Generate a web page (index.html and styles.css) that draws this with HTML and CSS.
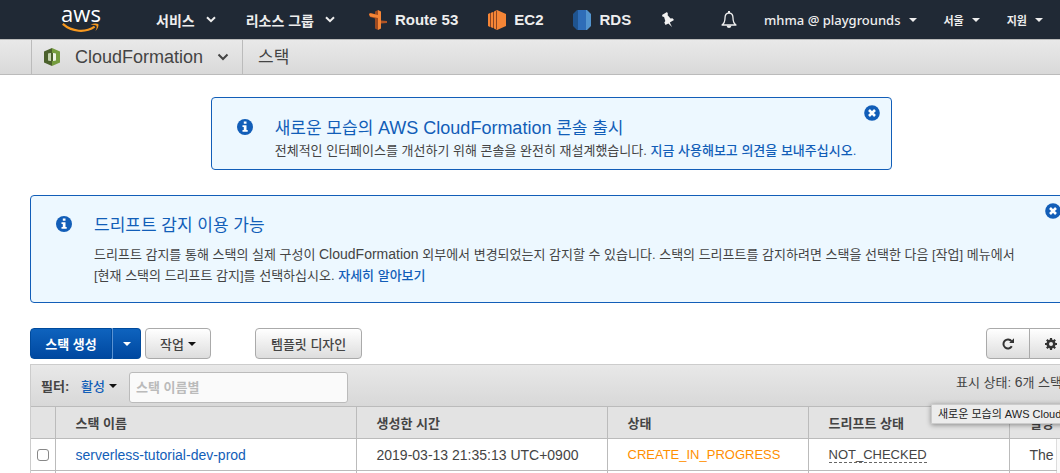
FILE: index.html
```html
<!DOCTYPE html>
<html lang="ko">
<head>
<meta charset="utf-8">
<title>CloudFormation 스택</title>
<link rel="stylesheet" href="styles.css">
</head>
<body>
<nav class="topnav">
  <a class="logo" href="#" aria-label="aws">
    <span class="logo-text">aws</span>
    <svg class="logo-smile" width="42" height="10" viewBox="0 0 42 11"><path d="M1 1C11 10 26 11 36 4" fill="none" stroke="#f7981f" stroke-width="2.4"/><path d="M31.5 1.6C35 .2 38.5.2 40 1.2c.8 2-.6 5.400-3 7.600.8-2.400 1.800-4.800 1-5.800-1-.8-3.800-.9-6.500-1.400z" fill="#f7981f"/></svg>
  </a>
  <button class="nav-item">서비스<svg width="10" height="7" viewBox="0 0 10 7"><path d="M1 1.200l4 4 4-4" class="chev"/></svg></button>
  <button class="nav-item nav-groups">리소스 그룹<svg width="10" height="7" viewBox="0 0 10 7"><path d="M1 1.200l4 4 4-4" class="chev"/></svg></button>
  <a class="shortcut" href="#"><svg width="18" height="20" viewBox="0 0 18 20"><path d="M6 1.500L9 0v20l-3-1.500V8.500L1 7 0 4l1-1 5 1z" fill="#9d4a20"/><path d="M9 0l3 1.500v17L9 20z" fill="#f58536"/><path d="M0 4l1.500-.8L9 5v3L1 6.500z" fill="#f58536"/><path d="M12 10.500l6 .5v2l-6 .5z" fill="#b05425"/></svg>Route 53</a>
  <a class="shortcut" href="#"><svg width="18" height="20" viewBox="0 0 18 20"><path d="M0 4l2-1v14l-2-1zM3 2.800L5 2v16l-2-.8zM6 1.500L9 0v20l-3-1.500z" fill="#f58536"/><path d="M2 3h1v14H2zM5 2h1v16H5zM8 .5h1v19H8z" fill="#8a4523"/><path d="M9 0l9 4v12l-9 4z" fill="#f58536"/></svg>EC2</a>
  <a class="shortcut" href="#"><svg width="18" height="20" viewBox="0 0 18 20"><path d="M0 4l4-4h5v20H4l-4-4z" fill="#1f5490"/><path d="M5 0h8v20H5z" fill="#2e6db8"/><path d="M13 0h1l4 4v12l-4 4h-1z" fill="#5294cf"/></svg>RDS</a>
  <button class="icon-btn" aria-label="고정"><svg width="13" height="15" viewBox="0 0 13 15"><path d="M1 3L6 0l1 2-.5 1L9.500 6.500l2-.3L13 8l-4.200 2.500L11 15 7.300 11.400 4.500 13 3.300 10.500l1-1.500L3 4.700 1.800 5z" fill="#f2f2f2"/></svg></button>
  <div class="nav-right">
    <button class="icon-btn" aria-label="알림"><svg width="16" height="17" viewBox="0 0 16 17"><path d="M8 2C5 2 4 4 4 7c0 3-.8 5.500-3 7h14c-2.200-1.500-3-4-3-7 0-3-1-5-4-5z" fill="none" stroke="#eee" stroke-width="1.300" stroke-linejoin="round"/><path d="M7 0h2v2H7zM5.500 14.500h5Q10 17 8 17t-2.500-2.500z" fill="#eee"/></svg></button>
    <button class="menu user">mhma @ playgrounds<i class="caret"></i></button>
    <button class="menu">서울<i class="caret"></i></button>
    <button class="menu">지원<i class="caret"></i></button>
  </div>
</nav>
<header class="subnav">
  <button class="service">
    <svg width="16" height="18" viewBox="0 0 16 18"><path d="M0 3.500L8 0v5L4 5.700v6.600l4 .7v5L0 14.500z" fill="#4b612c"/><path d="M16 3.500L8 0v5l4 .7v6.600l-4 .7v5l8-3.500z" fill="#759c3e"/><path d="M4 5.700L7 5v8l-3-.7z" fill="#c4d4ae"/><path d="M9 5l3 .7v6.600L9 13z" fill="#eef4e4"/><path d="M7 5h2v8H7z" fill="#4b612c"/></svg>
    <span>CloudFormation</span>
    <svg width="12" height="8" viewBox="0 0 12 8"><path d="M1.500 1.500L6 6l4.500-4.500" fill="none" stroke="#444" stroke-width="2"/></svg>
  </button>
  <h1 class="crumb">스택</h1>
</header>
<main class="content">
  <section class="notice notice-small">
    <svg class="info" width="16" height="16" viewBox="0 0 16 16"><circle cx="8" cy="8" r="8" fill="#125eb8"/><path d="M6.800 2.500h2.700v2.200H6.800zM5.500 6.300h4v4.700h1.200v1.800H5.500V11h1.300V8H5.500z" fill="#fff"/></svg>
    <div>
      <h2>새로운 모습의 <span class="latin">AWS CloudFormation</span> 콘솔 출시</h2>
      <p>전체적인 인터페이스를 개선하기 위해 콘솔을 완전히 재설계했습니다. <a href="#">지금 사용해보고 의견을 보내주십시오.</a></p>
    </div>
    <button class="close" aria-label="닫기"><svg width="16" height="16" viewBox="0 0 16 16"><circle cx="8" cy="8" r="7.800" fill="#125eb8"/><path d="M5 5l6 6M11 5l-6 6" stroke="#fff" stroke-width="2.600"/></svg></button>
  </section>
  <section class="notice notice-wide">
    <svg class="info" width="16" height="16" viewBox="0 0 16 16"><circle cx="8" cy="8" r="8" fill="#125eb8"/><path d="M6.800 2.500h2.700v2.200H6.800zM5.500 6.300h4v4.700h1.200v1.800H5.500V11h1.300V8H5.500z" fill="#fff"/></svg>
    <div>
      <h2>드리프트 감지 이용 가능</h2>
      <p>드리프트 감지를 통해 스택의 실제 구성이 <span class="latin">CloudFormation</span> 외부에서 변경되었는지 감지할 수 있습니다. 스택의 드리프트를 감지하려면 스택을 선택한 다음 [작업] 메뉴에서 [현재 스택의 드리프트 감지]를 선택하십시오. <a href="#">자세히 알아보기</a></p>
    </div>
    <button class="close" aria-label="닫기"><svg width="16" height="16" viewBox="0 0 16 16"><circle cx="8" cy="8" r="7.800" fill="#125eb8"/><path d="M5 5l6 6M11 5l-6 6" stroke="#fff" stroke-width="2.600"/></svg></button>
  </section>
  <div class="toolbar">
    <div class="group">
      <button class="btn primary">스택 생성</button><button class="btn primary split" aria-label="생성 옵션"><i class="caret"></i></button>
    </div>
    <button class="btn action">작업<i class="caret"></i></button>
    <button class="btn design">템플릿 디자인</button>
    <div class="group tools">
      <button class="btn tool" aria-label="새로 고침"><svg width="12" height="12" viewBox="0 0 12 12"><path d="M9.800 8.300A4.500 4.500 0 1 1 9.500 3.200" fill="none" stroke="#333" stroke-width="2"/><path d="M12 .3V5H7.200z" fill="#333"/></svg></button><button class="btn tool" aria-label="설정"><svg width="12" height="12" viewBox="0 0 12 12"><circle cx="6" cy="6" r="3.300" fill="none" stroke="#333" stroke-width="2.600"/><path d="M6 0v2.500M6 9.500V12M0 6h2.500M9.500 6H12M1.800 1.800l1.700 1.700M8.500 8.500l1.700 1.700M1.800 10.200l1.700-1.700M8.500 3.500l1.700-1.700" stroke="#333" stroke-width="2.200"/></svg></button>
    </div>
  </div>
  <div class="panel">
    <div class="filter">
      <label for="q">필터:</label>
      <button class="active-filter">활성<i class="caret"></i></button>
      <input id="q" type="text" placeholder="스택 이름별">
      <span class="count">표시 상태: <span class="latin">6</span>개 스택</span>
    </div>
    <table>
      <colgroup><col class="c-check"><col class="c-name"><col class="c-time"><col class="c-state"><col class="c-drift"><col class="c-desc"><col class="c-gutter"></colgroup>
      <thead><tr><th></th><th>스택 이름</th><th>생성한 시간</th><th>상태</th><th>드리프트 상태</th><th colspan="2">설명</th></tr></thead>
      <tbody>
        <tr><td class="check"><input type="checkbox" aria-label="serverless-tutorial-dev-prod"></td><td><a href="#">serverless-tutorial-dev-prod</a></td><td>2019-03-13 21:35:13 UTC+0900</td><td class="status progress">CREATE_IN_PROGRESS</td><td class="status"><span class="drift">NOT_CHECKED</span></td><td>The</td><td class="gutter"></td></tr>
        <tr><td></td><td></td><td></td><td></td><td></td><td></td><td class="gutter"></td></tr>
      </tbody>
    </table>
    <div class="tooltip" role="tooltip">새로운 모습의 AWS CloudFormation</div>
  </div>
</main>
</body>
</html>
```
FILE: styles.css
```css
* { box-sizing: border-box; }
body {
  margin: 0;
  overflow: hidden;
  background: #fff;
  color: #444;
  font-family: "Liberation Sans", "Noto Sans CJK KR", sans-serif;
  font-size: 13px;
}
button { margin: 0; padding: 0; border: 0; background: none; color: inherit; font: inherit; white-space: nowrap; }
svg { display: block; flex: none; }
a { color: #125eb8; text-decoration: none; font-weight: 500; }
h1, h2, p { margin: 0; font-weight: 400; }
.latin { font-size: 14px; }
.caret { display: inline-block; border: 4px solid transparent; border-top-color: currentColor; border-bottom: 0; }

.topnav { display: flex; align-items: center; gap: 30px; height: 39px; padding: 0 17px 0 60px; background: #202935; color: #eee; font-weight: 700; }
.logo { display: flex; flex-direction: column; align-items: center; width: 42px; margin-right: 24px; }
.logo-text { color: #fff; font: 500 22px/15px "Open Sans", sans-serif; margin-bottom: 2px; }
.nav-item { display: flex; align-items: center; gap: 11px; font-size: 14px; }
.nav-groups { margin-right: 4px; }
.chev { fill: none; stroke: #eee; stroke-width: 2; }
.shortcut { display: flex; align-items: center; gap: 8px; color: #eee; font-size: 15px; font-weight: 700; white-space: nowrap; }
.nav-right { display: flex; align-items: center; gap: 27px; margin-left: auto; }
.menu { display: flex; align-items: center; gap: 8px; font-size: 11px; }
.user { font: 500 13px "Noto Sans", sans-serif; }

.subnav { display: flex; height: 36px; padding-left: 31px; border-top: 1px solid #bbb; border-bottom: 1px solid #bbb; background: linear-gradient(#e9e9e9, #d9d9d9); }
.service { display: flex; align-items: center; padding: 0 13px 0 12px; border: solid #bbb; border-width: 0 1px; font-size: 18px; }
.service span { margin: 0 14px 0 15px; }
.crumb { padding-left: 15px; font-size: 17px; line-height: 35px; }

.content { margin-right: -13px; padding: 22px 0 0 30px; }
.notice { position: relative; display: flex; border: 1px solid #125eb8; border-radius: 4px; background: #edf8ff; line-height: 21px; }
.notice h2 { color: #125eb8; font-size: 17px; line-height: 23px; }
.notice h2 .latin { font-size: 18px; }
.notice .info { margin: 2px 22px 0 0; }
.notice-small { width: fit-content; margin: 0 auto 25px; padding: 19px 35px 8px 25px; }
.notice-wide { padding: 18px 40px 16px 25px; margin-bottom: 25px; }
.notice-wide h2 { margin-bottom: 7px; }
.close { position: absolute; top: 7px; right: 11px; }

.toolbar { display: flex; align-items: center; margin-bottom: 5px; }
.group { display: flex; }
.btn { height: 31px; border: 1px solid #aaa; border-radius: 4px; background: linear-gradient(#fff, #ddd); font-size: 13px; font-weight: 500; }
.primary { width: 82px; border-color: #004a9c; border-radius: 4px 0 0 4px; background: linear-gradient(#0e63be, #0048a0); color: #fff; font-weight: 700; }
.split { display: flex; align-items: center; justify-content: center; width: 29px; border-left-color: #5b93d3; border-radius: 0 4px 4px 0; }
.action { display: flex; align-items: center; gap: 4px; margin: 0 44px 0 4px; padding: 0 14px; }
.action .caret { color: #111; }
.design { padding: 0 15px; }
.tools { margin-left: auto; }
.tool { display: flex; align-items: center; justify-content: center; width: 44px; border-radius: 4px 0 0 4px; }
.tool + .tool { margin-left: -1px; border-radius: 0 4px 4px 0; }

.panel { position: relative; border-left: 1px solid #ccc; }
.filter { display: flex; align-items: center; height: 42px; padding: 0 11px 0 10px; border-top: 1px solid #ccc; background: linear-gradient(#e8e8e8, #d8d8d8); }
.filter label { width: 40px; font-weight: 700; }
.active-filter { display: flex; align-items: center; gap: 4px; width: 48px; color: #125eb8; font-weight: 500; }
.active-filter .caret { color: #111; }
.filter input { width: 219px; height: 31px; margin-top: 4px; padding: 0 6px; border: 1px solid #bbb; border-radius: 3px; background: #fafafa; font: inherit; }
.filter input::placeholder { color: #bbb; font-weight: 700; }
.count { align-self: flex-start; margin-left: auto; line-height: 34px; white-space: nowrap; }

table { width: 100%; table-layout: fixed; border-collapse: collapse; font-size: 14px; }
.c-check { width: 24px; }
.c-name { width: 301px; }
.c-time { width: 251px; }
.c-state, .c-drift { width: 201px; }
.c-gutter { width: 16px; }
th, td { height: 32px; padding: 0 0 0 20px; border: solid #bbb; border-width: 1px 0 1px 1px; text-align: left; white-space: nowrap; }
th:first-child, td:first-child { border-left: 0; }
th { background: #e3e3e3; font-size: 13px; }
td.check { padding: 0 0 0 6px; }
.check input { display: block; width: 12px; height: 12px; margin: 0; appearance: none; border: 1px solid #888; border-radius: 3px; background: #fff; }
.status { font-size: 13px; }
.progress { color: #ff8f00; }
.drift { border-bottom: 1px dashed #666; }
td.gutter { border-width: 0 0 0 1px; border-color: #ddd; background: #fafafa; }
.tooltip { position: absolute; top: 40px; left: 900px; padding: 0 6px; border: 1px solid #ccc; background: #ececec; color: #222; box-shadow: 0 1px 5px rgba(0, 0, 0, .4); font-size: 11px; line-height: 18px; white-space: nowrap; }
```
